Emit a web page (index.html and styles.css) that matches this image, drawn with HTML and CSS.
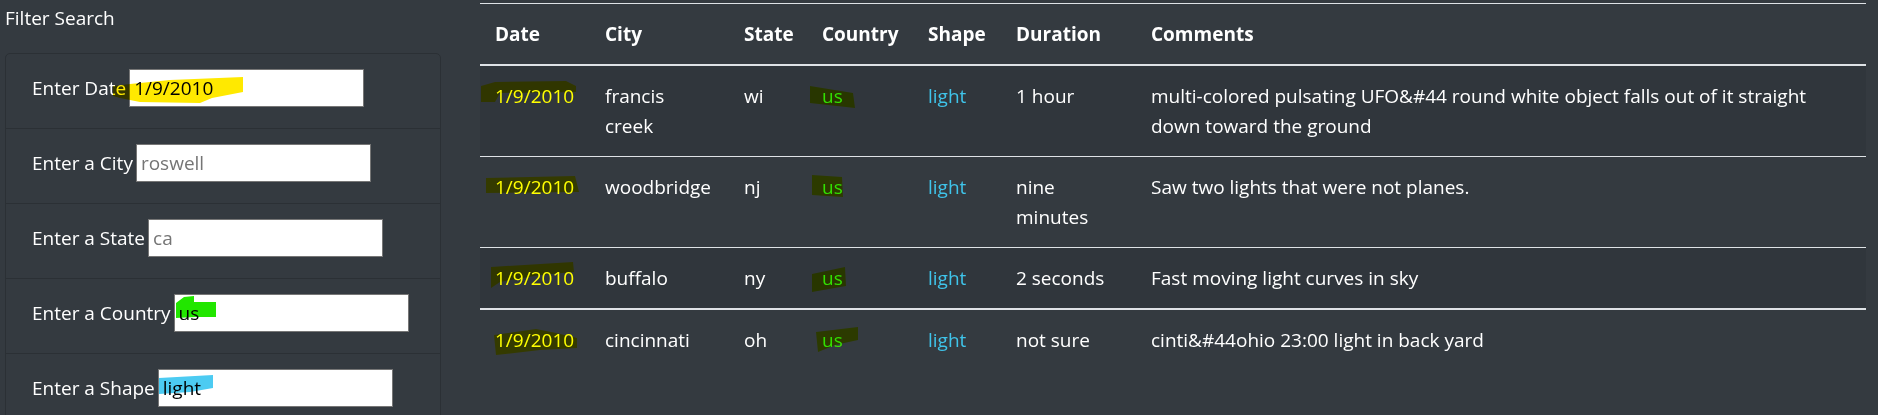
FILE: index.html
```html
<!DOCTYPE html>
<html lang="en">
<head>
<meta charset="utf-8">
<title>UFO Sightings</title>
<link rel="stylesheet" href="styles.css">
</head>
<body>
<div class="page">
  <aside class="sidebar">
    <div class="sidebar-title">Filter Search</div>
    <ul class="filter-card">
      <li class="filter-item">
        <label class="filter-label" for="datetime">Enter Date</label>
        <input class="filter-input" id="datetime" type="text" value="1/9/2010" placeholder="1/11/2011">
      </li>
      <li class="filter-item">
        <label class="filter-label" for="city">Enter a City</label>
        <input class="filter-input" id="city" type="text" placeholder="roswell">
      </li>
      <li class="filter-item">
        <label class="filter-label" for="state">Enter a State</label>
        <input class="filter-input" id="state" type="text" placeholder="ca">
      </li>
      <li class="filter-item">
        <label class="filter-label" for="country">Enter a Country</label>
        <input class="filter-input" id="country" type="text" value="us" placeholder="us">
      </li>
      <li class="filter-item">
        <label class="filter-label" for="shape">Enter a Shape</label>
        <input class="filter-input" id="shape" type="text" value="light" placeholder="triangle">
      </li>
    </ul>
  </aside>
  <main class="main">
    <table class="ufo-table">
      <colgroup>
        <col class="w-date"><col class="w-city"><col class="w-state"><col class="w-country"><col class="w-shape"><col class="w-duration"><col>
      </colgroup>
      <thead>
        <tr><th>Date</th><th>City</th><th>State</th><th>Country</th><th>Shape</th><th>Duration</th><th>Comments</th></tr>
      </thead>
      <tbody>
        <tr>
          <td class="c-date">1/9/2010</td><td>francis creek</td><td>wi</td><td class="c-country">us</td><td class="c-shape">light</td><td>1 hour</td>
          <td>multi-colored pulsating UFO&amp;#44 round white object falls out of it straight down toward the ground</td>
        </tr>
        <tr>
          <td class="c-date">1/9/2010</td><td>woodbridge</td><td>nj</td><td class="c-country">us</td><td class="c-shape">light</td><td>nine minutes</td>
          <td>Saw two lights that were not planes.</td>
        </tr>
        <tr>
          <td class="c-date">1/9/2010</td><td>buffalo</td><td>ny</td><td class="c-country">us</td><td class="c-shape">light</td><td>2 seconds</td>
          <td>Fast moving light curves in sky</td>
        </tr>
        <tr>
          <td class="c-date">1/9/2010</td><td>cincinnati</td><td>oh</td><td class="c-country">us</td><td class="c-shape">light</td><td>not sure</td>
          <td>cinti&amp;#44ohio 23:00 light in back yard</td>
        </tr>
      </tbody>
    </table>
  </main>
</div>

<svg class="marks" width="1878" height="415" viewBox="0 0 1878 415" aria-hidden="true">
  <!-- highlighter strokes over the filter inputs -->
  <path class="mk-yellow" d="M113,86 L130,84 L170,80 L243,77 L243,92 L212,98 L200,103 L140,102 L120,98 L113,96 Z"/>
  <path class="mk-green" d="M176,303 L184,297 L194,296 L194,302 L216,302 L216,317 L195,317 L176,318 Z"/>
  <path class="mk-cyan" d="M159,378 L213,375 L213,388 L190,392 L159,394 Z"/>
  <!-- highlighter strokes over the table -->
  <path class="mk-olive" d="M481,86 L495,82 L566,81 L576,86 L576,92 L500,93 L495,102 L481,102 Z"/>
  <path class="mk-lime" d="M810,86 L853,93 L855,108 L810,103 Z"/>
  <path class="mk-olive" d="M486,178 L575,176 L579,192 L486,193 Z"/>
  <path class="mk-lime" d="M812,175 L842,177 L843,197 L812,195 Z"/>
  <path class="mk-olive" d="M491,267 L573,262 L574,272 L540,275 L500,282 L491,288 Z"/>
  <path class="mk-lime" d="M812,274 L845,267 L846,286 L812,292 Z"/>
  <path class="mk-olive" d="M494,335 L536,329 L556,333 L577,338 L577,348 L540,350 L496,355 Z"/>
  <path class="mk-lime" d="M816,332 L858,327 L858,340 L835,345 L818,352 Z"/>
</svg>
</body>
</html>
```
FILE: styles.css
```css
html {
  overflow: hidden;
}

body {
  margin: 0;
  background: #343a40;
  color: #ffffff;
  font-family: "Open Sans", "Noto Sans", sans-serif;
  font-size: 19px;
  line-height: 30px;
}

.page {
  display: flex;
  align-items: flex-start;
}

/* ---------- sidebar ---------- */
.sidebar {
  width: 436px;
  margin-left: 5px;
  padding-top: 3px;
  flex: none;
}

.sidebar-title {
  height: 30px;
  margin: 0 0 20px 0;
}

.filter-card {
  list-style: none;
  margin: 0;
  padding: 0;
  border: 1px solid #2b3035;
  border-radius: 5px;
}

.filter-item {
  display: flex;
  align-items: baseline;
  gap: 3px;
  padding: 15px 25px 21px 26px;
  border-bottom: 1px solid #2b3035;
}

.filter-item:last-child {
  border-bottom: none;
}

.filter-label {
  white-space: nowrap;
}

.filter-input {
  box-sizing: border-box;
  width: 235px;
  height: 38px;
  margin: 0;
  padding: 0 4px;
  border: 1px solid #767676;
  border-radius: 0;
  background: #ffffff;
  color: #000000;
  font-family: "Open Sans", "Noto Sans", sans-serif;
  font-size: 19px;
  outline: none;
}

.filter-input::placeholder {
  color: #757575;
}

/* ---------- table ---------- */
.main {
  margin-left: 39px;
  width: 1386px;
  flex: none;
  padding-top: 3px;
}

.ufo-table {
  width: 100%;
  border-collapse: collapse;
  table-layout: fixed;
}

.w-date { width: 110px; }
.w-city { width: 139px; }
.w-state { width: 78px; }
.w-country { width: 106px; }
.w-shape { width: 88px; }
.w-duration { width: 135px; }

.ufo-table th,
.ufo-table td {
  padding: 15px;
  text-align: left;
  vertical-align: top;
  border-top: 1px solid #dee2e6;
}

.ufo-table th {
  font-weight: 700;
  border-bottom: 2px solid #dee2e6;
}

.ufo-table tbody tr:nth-child(odd) {
  background: rgba(0, 0, 0, 0.06);
}

.ufo-table tbody tr:nth-child(3) td {
  border-bottom: 2px solid #dee2e6;
}

.c-date {
  color: #ffff00;
}

.c-country {
  color: #3ce000;
}

.c-shape {
  color: #3fc4ea;
}

/* ---------- highlighter overlay ---------- */
.marks {
  position: absolute;
  top: 0;
  left: 0;
  pointer-events: none;
  mix-blend-mode: multiply;
}

.mk-yellow { fill: #ffe900; }
.mk-green { fill: #22e600; }
.mk-cyan { fill: #4ccbf2; }
.mk-olive { fill: #ffff00; }
.mk-lime { fill: #d4ff00; }
```
